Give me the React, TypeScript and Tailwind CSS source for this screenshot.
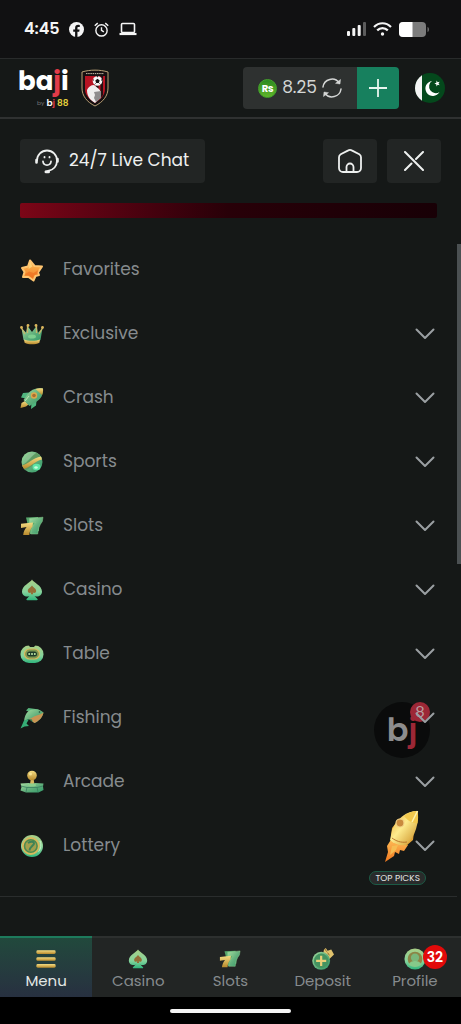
import React from 'react';

// Shared gradients, referenced by id from every icon
const Gradients = () => (
  <svg width="0" height="0" className="absolute" aria-hidden="true">
    <defs>
      <linearGradient id="gold" x1="0" y1="0" x2="0" y2="1">
        <stop offset="0" stopColor="#f3dc82" />
        <stop offset="1" stopColor="#b98a2c" />
      </linearGradient>
      <linearGradient id="green" x1="0" y1="0" x2="1" y2="1">
        <stop offset="0" stopColor="#a5dda0" />
        <stop offset="0.55" stopColor="#5fae7b" />
        <stop offset="1" stopColor="#2f9a68" />
      </linearGradient>
      <linearGradient id="mint" x1="0" y1="0" x2="0" y2="1">
        <stop offset="0" stopColor="#a9cf86" />
        <stop offset="0.6" stopColor="#85d39c" />
        <stop offset="1" stopColor="#2fb57c" />
      </linearGradient>
      <linearGradient id="orange" x1="0" y1="0" x2="0" y2="1">
        <stop offset="0" stopColor="#ffc05a" />
        <stop offset="1" stopColor="#f0781f" />
      </linearGradient>
      <linearGradient id="rocketBody" x1="0" y1="0" x2="1" y2="1">
        <stop offset="0" stopColor="#e9a52e" />
        <stop offset="0.45" stopColor="#fdeb8d" />
        <stop offset="1" stopColor="#c98a1e" />
      </linearGradient>
    </defs>
  </svg>
);

interface IconProps {
  className?: string;
}

const Svg: React.FC<IconProps & { children: React.ReactNode }> = ({ className = 'size-6', children }) => (
  <svg viewBox="0 0 24 24" className={className} fill="none" aria-hidden="true">
    {children}
  </svg>
);

const StarIcon = () => (
  <Svg>
    <path d="M10 2.500 14.500 8l7.500.5-4 6 1 2.500-3.500 1-2 4.500-5-3.500H3l1.500-5L2 10l6-1.500Z" fill="url(#orange)" stroke="#ffc570" strokeWidth="2" strokeLinejoin="round" />
    <path d="m5 16.500 4-3 4.500 1.500 5-3-1 4-3.500 1-1.500 3-3.500-2.500Z" fill="#ec6d20" opacity="0.600" />
    <path d="m10 3.500 2.500 5-4 2.500Z" fill="#ffe08a" opacity="0.700" />
  </Svg>
);

const CrownIcon = () => (
  <Svg>
    <path d="M1.500 6 6 10.500 7.500 4l4.500 6 4.500-6L18 10.500 22.500 6 20.500 18c-4 2-13 2-17 0Z" fill="url(#green)" />
    <path d="M1.500 6 5 12M7.500 4v7M16.500 4v7M22.500 6 19 12" stroke="#c9b468" strokeWidth="1.300" />
    <path d="M4 17.500c4 1.800 12 1.800 16 0l-.6 3.200c-4 2-10.800 2-14.800 0Z" fill="url(#gold)" />
    <circle cx="1.500" cy="5.500" r="1.400" fill="#dcb65c" />
    <circle cx="8" cy="3.500" r="1.400" fill="#dcb65c" />
    <circle cx="16" cy="3.500" r="1.400" fill="#dcb65c" />
    <circle cx="22.500" cy="5.500" r="1.400" fill="#dcb65c" />
    <ellipse cx="12" cy="14.500" rx="4" ry="2" fill="#7dcf8e" />
  </Svg>
);

const CrashIcon = () => (
  <Svg>
    <path d="M9 6.500 3 7 1 11.500l5 1ZM16.500 15l-.5 4.500-5 3.500.5-6Z" fill="#4fb57e" />
    <path d="M5 15 1.500 17 .5 22 6 20.500 8.500 18.500Z" fill="url(#gold)" />
    <path d="M23 2.500c-7-1.300-12 1-15 5L3.500 14l6 6 6.500-4c5-3 7.500-7.500 7-13.500Z" fill="url(#green)" />
    <path d="M23 2.500c-3-.5-5-.4-7.500.5l6.500 6c1-2.300 1.200-4 1-6.500Z" fill="url(#gold)" />
    <circle cx="14" cy="9.500" r="3.200" fill="#dca94c" />
    <circle cx="14" cy="9.500" r="1.800" fill="#a76e31" />
    <path d="m5 15 4-5" stroke="#bde9b5" />
  </Svg>
);

const SportsIcon = () => (
  <Svg>
    <circle cx="12" cy="12" r="10.500" fill="url(#green)" />
    <path d="M2 15C8 13 12 5 17 2.800L22 8C16 10 11 19 5.500 20.300Z" fill="#5f9a62" />
    <path d="M2 15.500C8 14 13 8 21 6.500l1 3C15 11 9 18 4 19Z" fill="url(#gold)" />
    <path d="M7 5.500c3-2.500 6-2.500 8-1.700-3 1-5 5-10 8Z" fill="#8dbf91" />
    <ellipse cx="16.500" cy="17" rx="4" ry="3.200" fill="#5fe5a5" />
    <ellipse cx="16" cy="17.500" rx="1.800" ry="1.300" fill="#c4ffdd" />
  </Svg>
);

const SlotsIcon: React.FC<IconProps> = ({ className }) => (
  <Svg className={className}>
    <path d="M6 3.500 18 3l1 14-9 3Z" fill="#57a66c" />
    <path d="M9.500 4.500 23 3.200l-.7 4.300C19.500 11 18 15 17.700 20h-7C11 15 13 11 15.500 8.500l-6 .4Z" fill="url(#green)" stroke="#8fce8f" strokeWidth="0.500" />
    <path d="m1 9.800 12-1.300-.5 4C10.500 15 9.500 17.500 9.300 21H3.200c.4-3.500 1.600-5.600 3.400-8L1 14Z" fill="url(#gold)" />
  </Svg>
);

const SpadeIcon: React.FC<IconProps> = ({ className }) => (
  <Svg className={className}>
    <path d="M12 1.500c1.500 3 10 6 10 12 0 4.500-4.500 6-7.500 4.500l3 3c.4.800 0 1.200-.7 1.200H7.200c-.7 0-1.100-.4-.7-1.200l3-3C6.500 19.500 2 18 2 13.500c0-6 8.500-9 10-12Z" fill="url(#mint)" />
    <path d="M12 7.500c.8 1.700 4.200 3 4.200 5.500 0 2-2.300 2.500-3.400 1.500l.4 1.800h-2.400l.4-1.800C10 15.500 7.800 15 7.800 13c0-2.500 3.400-3.800 4.200-5.500Z" fill="#936d36" />
  </Svg>
);

const TableIcon = () => (
  <Svg>
    <rect x="0.500" y="3.500" width="23" height="17.500" rx="8.500" fill="url(#mint)" />
    <path d="M8.500 3h7l-1.500 2h-4Z" fill="#151817" />
    <rect x="4.500" y="7" width="15" height="10" rx="5" fill="#7d9650" stroke="#d9b85e" strokeWidth="1.200" />
    <rect x="7" y="9.500" width="10" height="5" rx="2.500" fill="#1d3b2a" />
    <circle cx="9.200" cy="12" r="1" fill="#c2e9a6" />
    <circle cx="12" cy="12" r="1" fill="#c2e9a6" />
    <circle cx="14.800" cy="12" r="1" fill="#c2e9a6" />
  </Svg>
);

const FishIcon = () => (
  <Svg>
    <path d="M6 4.500 8.500 2 19 3.500 13 7Z" fill="#57b47c" />
    <path d="M23.500 6.500C20 2.500 12 2 8 5.500 5.500 8 4.500 11 4 15l5-2 5.500 4C19 15 22.500 11.500 23.500 6.500Z" fill="url(#green)" />
    <path d="M23.500 6.500c-4 3-8 2.500-12 5.500L9 13l5.500 4C19 15 22.500 11.500 23.500 6.500Z" fill="#c99453" />
    <path d="M4 14.500 2.500 18l-2 4.500 4-2 4.500-.5-2.500-2.500L9 13Z" fill="#35ad76" />
    <path d="m9 13 3 .5.500 2.500Z" fill="#2b8158" />
    <circle cx="19.500" cy="6" r="0.800" fill="#234534" />
  </Svg>
);

const ArcadeIcon = () => (
  <Svg>
    <path d="M10.800 9h2.800l.8 5H10Z" fill="#d7b65e" />
    <path d="M.5 13.500 9 13l3 1 3-1 8.500.5-.5 3 .5 3.500-5 2.500H6L.5 20.500 1.500 17Z" fill="url(#green)" />
    <path d="m1 16 6 1.500h10L23 16M7 17.500 6 22M17 17.500l1 4.500" stroke="#3b7f61" strokeWidth="0.800" />
    <ellipse cx="12" cy="15" rx="4" ry="1.600" fill="#8ccf8c" />
    <circle cx="12" cy="5.500" r="4.800" fill="url(#gold)" />
    <circle cx="10.500" cy="4" r="1.500" fill="#fff0a8" opacity="0.700" />
  </Svg>
);

const LotteryIcon = () => (
  <Svg>
    <circle cx="12" cy="12" r="11" fill="url(#mint)" />
    <circle cx="10.800" cy="12" r="8" fill="#4c8c50" stroke="#d8b95d" strokeWidth="1.800" />
    <circle cx="10.800" cy="12" r="5.500" fill="#a3a04d" />
    <path d="M8 9c3-2 6-1.500 6 .5s-4 3-4.500 7" stroke="#3f8357" strokeWidth="2" />
    <path d="M20 7c1.500 3 1 8-1.500 10.500" stroke="#c5f7c6" strokeWidth="1" />
  </Svg>
);

const DepositIcon = () => (
  <Svg>
    <path d="m13 2 2-2 2 3 4-1.500L24 7l-5 5-7-4Z" fill="#e0c26c" />
    <path d="m17 5 2 3M14 1l2 3" stroke="#8c6728" />
    <circle cx="10" cy="14" r="9.800" fill="url(#green)" />
    <circle cx="10" cy="14" r="8" fill="#459460" />
    <path d="M8.800 8.500h2.400v4.300h4.300v2.400h-4.300v4.300H8.800v-4.300H4.500v-2.400h4.300Z" fill="#ead078" />
  </Svg>
);

const ProfileIcon = () => (
  <Svg>
    <circle cx="12" cy="12" r="11.500" fill="url(#mint)" />
    <circle cx="12" cy="12" r="8" fill="#8c8446" />
    <circle cx="12" cy="10.500" r="4.500" fill="#79b77b" />
    <path d="M5 18c2-5 12-5 14 0-3.500 3.500-10.500 3.500-14 0Z" fill="#85c98a" />
  </Svg>
);

const MenuIcon = () => (
  <Svg>
    <rect x="1.500" y="2.500" width="21" height="4" rx="1.500" fill="url(#gold)" />
    <rect x="1.500" y="10" width="21" height="4" rx="1.500" fill="url(#gold)" />
    <rect x="1.500" y="17.500" width="21" height="4" rx="1.500" fill="url(#gold)" />
  </Svg>
);

const CrestLogo = () => (
  <svg viewBox="0 0 28 38" className="h-[38px] w-7" aria-label="Club crest" role="img">
    <path d="M1 3c8-2.500 18-2.500 26 0v16c0 8-5 14-13 18C6 33 1 27 1 19Z" fill="#171011" stroke="#b9a277" strokeWidth="1" />
    <path d="M4 7h20v13c0 6-4 10-10 14C8 30 4 26 4 20Z" fill="#b81322" />
    <path d="M15 7h2.500v24L15 33ZM19.500 7H22v19l-2.500 3Z" fill="#241113" />
    <path d="M5 4.600h18" stroke="#c7bda7" strokeWidth="1" strokeDasharray="1.500 0.700" />
    <path d="M6 21c1-3 4-5 7-5l5 4 2 3-1 2 1 3-6 6C9 31 6 27 6 21Z" fill="#f0eeee" />
    <path d="m13 23 7-1v7l-5 4-2-4 1-3Z" fill="#8f8c8d" />
    <circle cx="16.500" cy="12" r="4.800" fill="#f7f7f7" />
    <path d="m16.500 9.800 2.200 1.600-.9 2.500h-2.600l-.9-2.500Z" fill="#171011" />
    <path d="M16.500 7.200v1M21 11h-1M12 11h1M13.500 15.500l1-1M19.500 15.500l-1-1" stroke="#171011" />
  </svg>
);

const FlagIcon = () => (
  <svg viewBox="0 0 30 30" className="size-[30px] rounded-full" aria-hidden="true">
    <rect width="30" height="30" fill="#04481c" />
    <rect width="7" height="30" fill="#f4f4f4" />
    <path d="M17 8a7.500 7.500 0 1 0 7.500 11A6.500 6.500 0 1 1 17 8Z" fill="#fff" />
    <path d="m21.500 7.500 1.200 1.800 2-.5-1.200 1.800 1.200 1.700-2-.5-1.200 1.700-.1-2.100-2-.8 2-.8Z" fill="#fff" />
  </svg>
);

const RefreshIcon = () => (
  <svg viewBox="0 0 20 20" className="size-5" fill="none" stroke="#d4d6d5" strokeWidth="1.500" aria-hidden="true">
    <path d="M1 9a9 9 0 0 1 16.300-4M19 11A9 9 0 0 1 2.700 15" strokeLinecap="round" />
    <path d="M18.500 1.500 18 6l-4.500-.7ZM1.500 18.500 2 14l4.500.7Z" fill="#d4d6d5" strokeWidth="0.500" />
  </svg>
);

const ChatIcon = () => (
  <svg viewBox="0 0 26 26" className="size-[26px]" fill="none" stroke="#eef0ef" strokeWidth="1.800" strokeLinecap="round" aria-hidden="true">
    <path d="M3 12.500a10 10 0 0 1 20 0c0 5.500-3.500 9.500-9 10.500" />
    <path d="M2.500 12v2.500M23.500 11v2.500" strokeWidth="2.600" />
    <path d="M12 23.800h2.500" strokeWidth="3" />
    <path d="M9 13.500c.6 4.800 7.400 4.800 8 0M10.500 8.800v.6M15.500 8.800v.6" />
  </svg>
);

const HomeIcon = () => (
  <svg viewBox="0 0 26 26" className="size-[26px]" fill="none" stroke="#eef0ef" strokeWidth="1.800" aria-hidden="true">
    <path d="M11.300 2.400a3.500 3.500 0 0 1 3.400 0l7.600 3.800A3.500 3.500 0 0 1 24 9.300V20a4 4 0 0 1-4 4H6a4 4 0 0 1-4-4V9.300a3.500 3.500 0 0 1 1.700-3.100ZM9.500 24v-5a3.500 3.500 0 0 1 7 0v5" />
  </svg>
);

const CloseIcon = () => (
  <svg viewBox="0 0 20 20" className="size-5" stroke="#eef0ef" strokeWidth="2" strokeLinecap="round" aria-hidden="true">
    <path d="m1 1 18 18M19 1l-7 7M7.500 12.500 1 19" />
  </svg>
);

const ChevronIcon = () => (
  <svg viewBox="0 0 20 12" className="h-3 w-5" fill="none" stroke="#9a9fa2" strokeWidth="2" strokeLinecap="round" strokeLinejoin="round" aria-hidden="true">
    <path d="m1.500 1.500 8.500 8.500 8.500-8.500" />
  </svg>
);

const StatusBar = () => (
  <div className="flex h-[58px] items-center justify-between bg-[#111112] pl-6 pr-[31px] text-[#f5f5f5]">
    <div className="flex items-center gap-2.5">
      <span className="w-[35px] text-base font-semibold">4:45</span>
      <svg viewBox="0 0 16 16" className="size-[15px]" aria-hidden="true">
        <circle cx="8" cy="8" r="8" fill="#f5f5f5" />
        <path d="M6.500 16v-5.500h-2V8h2V6.500c0-2.300 1.300-3.500 3.400-3.500l1.600.2v2H10c-.8 0-1 .5-1 1.100V8h2.300l-.4 2.500H9V16Z" fill="#111112" />
      </svg>
      <svg viewBox="0 0 16 16" className="size-[15px]" fill="none" stroke="#f5f5f5" strokeWidth="1.500" aria-hidden="true">
        <circle cx="8" cy="9" r="6" />
        <path d="M8 5.500V9l2.500 1.600M.8 4 4 1.200M15.200 4 12 1.200" />
      </svg>
      <svg viewBox="0 0 18 14" className="h-3.5 w-[18px]" fill="none" stroke="#f5f5f5" aria-hidden="true">
        <rect x="2.500" y="1.500" width="13" height="9" rx="1" strokeWidth="1.600" />
        <path d="M.5 12h17" strokeWidth="2.200" />
      </svg>
    </div>
    <div className="flex items-center gap-[7px]">
      <svg viewBox="0 0 19 14" className="h-3.5 w-[19px]" fill="#f5f5f5" aria-hidden="true">
        <rect y="9" width="3" height="5" rx="1" />
        <rect x="5.300" y="6" width="3" height="8" rx="1" />
        <rect x="10.700" y="3" width="3" height="11" rx="1" />
        <rect x="16" width="3" height="14" rx="1" fill="#5c5c5c" />
      </svg>
      <svg viewBox="0 0 19 14" className="h-3.5 w-[19px]" fill="none" stroke="#f5f5f5" strokeWidth="2.200" aria-hidden="true">
        <path d="M1 5c5-5 12-5 17 0M4.200 8.400c3-3 7.600-3 10.600 0" />
        <circle cx="9.500" cy="12" r="1.700" fill="#f5f5f5" stroke="none" />
      </svg>
      <svg viewBox="0 0 31 15" className="h-[15px] w-[31px]" aria-hidden="true">
        <rect width="27" height="15" rx="4" fill="#7c7c7c" />
        <path d="M4 0h9.500v15H4a4 4 0 0 1-4-4V4a4 4 0 0 1 4-4Z" fill="#fff" />
        <path d="M28.500 5c2 .5 2 4.500 0 5Z" fill="#6c6c6c" />
      </svg>
    </div>
  </div>
);

const Header = () => (
  <header className="flex h-[61px] items-center justify-between border-t border-b-2 border-t-[#292b2b] border-b-[#2f3131] bg-[#151817] pl-[18px] pr-4">
    <a href="#home" className="flex items-center gap-3" aria-label="baji">
      <div className="flex flex-col items-end">
        <span className="text-[26px] leading-7 font-bold text-white">
          ba<span className="text-[#e23b49]">j</span>i
        </span>
        <span className="mt-0.5 flex items-center gap-0.5 text-[9px] leading-3 font-semibold text-white">
          <span className="text-[6px] font-normal text-[#777]">by</span>
          <span>b<span className="text-[#e23b49]">j</span></span>
          <span className="text-[#e4cf3c]">88</span>
        </span>
      </div>
      <CrestLogo />
    </a>
    <div className="flex items-center gap-4">
      <div className="flex h-[42px] overflow-hidden rounded">
        <button type="button" className="flex w-[114px] items-center justify-center gap-[5px] bg-[#2e3130] text-[17px] text-[#d4d6d5]" aria-label="Balance 8.25, refresh">
          <span className="flex size-[19px] items-center justify-center rounded-full border border-[#43a42b] bg-linear-to-b from-[#2b8a20] to-[#5fb52a] text-[10px] font-bold text-white">
            ₨
          </span>
          8.25
          <RefreshIcon />
        </button>
        <button type="button" className="flex w-[42px] items-center justify-center bg-[#17805e]" aria-label="Deposit">
          <svg viewBox="0 0 18 18" className="size-[18px]" stroke="#e8f5ef" strokeWidth="1.800" aria-hidden="true">
            <path d="M9 0v18M0 9h18" />
          </svg>
        </button>
      </div>
      <button type="button" aria-label="Country">
        <FlagIcon />
      </button>
    </div>
  </header>
);

const MENU_ITEMS = [
  { label: 'Favorites', icon: <StarIcon />, expandable: false },
  { label: 'Exclusive', icon: <CrownIcon />, expandable: true },
  { label: 'Crash', icon: <CrashIcon />, expandable: true },
  { label: 'Sports', icon: <SportsIcon />, expandable: true },
  { label: 'Slots', icon: <SlotsIcon />, expandable: true },
  { label: 'Casino', icon: <SpadeIcon />, expandable: true },
  { label: 'Table', icon: <TableIcon />, expandable: true },
  { label: 'Fishing', icon: <FishIcon />, expandable: true },
  { label: 'Arcade', icon: <ArcadeIcon />, expandable: true },
  { label: 'Lottery', icon: <LotteryIcon />, expandable: true },
];

const MenuList = () => (
  <ul className="mt-5">
    {MENU_ITEMS.map((item) => (
      <li key={item.label}>
        <button type="button" className="flex h-16 w-full items-center pl-5 pr-[26px] text-left">
          {item.icon}
          <span className="ml-[19px] flex-1 text-[17px] text-[#868b8e]">{item.label}</span>
          {item.expandable && (
            <span className="relative z-10">
              <ChevronIcon />
            </span>
          )}
        </button>
      </li>
    ))}
  </ul>
);

// Promo shortcuts floating over the menu
const FloatingActions = () => (
  <div className="absolute top-[583px] right-[31px] flex flex-col items-end">
    <button type="button" className="relative flex size-14 items-center justify-center rounded-full bg-[#0a0b0b] text-[32px] font-semibold text-[#8d8d8d]" aria-label="bj, 8 notifications">
      <span className="leading-none">
        b<span className="text-[#9c2736]">j</span>
      </span>
      <span className="absolute top-0 right-0 flex size-5 items-center justify-center rounded-full bg-[#9c2736] text-[15px] leading-5 font-normal text-[#b9a0a3]">
        8
      </span>
    </button>
    <button type="button" className="mt-[51px] mr-1 flex flex-col items-center">
      <svg viewBox="0 0 36 54" className="ml-2 h-[54px] w-9" aria-hidden="true">
        <path d="m8 29-5 8 1 6-3 10 9-6 1-4 4 2 1-4 4 1 4-6Z" fill="url(#orange)" />
        <path d="m8 37-2 9 6-5 2-5Z" fill="#f6bd52" />
        <path d="M12 14 8 19l-1 10 5-3ZM30 23l-1 8-7 6-1-5Z" fill="#dfa136" />
        <path d="M33.500 2C23 2 13 9 8 21L6 31c4 4 10 6 16 5 10-9 13-23 11.500-34Z" fill="url(#rocketBody)" />
        <path d="M33.500 2c-6 0-10 2-13.500 5 4 5 8 7 13.500 7.500.8-4 .8-9 0-12.500Z" fill="#f2c84d" />
        <path d="M33.500 2 28 13" stroke="#fff2ae" strokeWidth="1.500" />
        <circle cx="16" cy="14" r="4" fill="#c98a3d" stroke="#f3d488" strokeWidth="1.200" />
        <path d="M8 29c4 3 9 5 15 4" stroke="#b9752b" fill="none" />
      </svg>
      <span className="mt-2 rounded-full border border-[#1c5b46] bg-[#292b2b] px-[5px] text-[9px] leading-3 whitespace-nowrap text-[#e2e3e3]">
        TOP PICKS
      </span>
    </button>
  </div>
);

const NAV_ITEMS = [
  { label: 'Menu', icon: <MenuIcon />, active: true, badge: 0 },
  { label: 'Casino', icon: <SpadeIcon />, active: false, badge: 0 },
  { label: 'Slots', icon: <SlotsIcon />, active: false, badge: 0 },
  { label: 'Deposit', icon: <DepositIcon />, active: false, badge: 0 },
  { label: 'Profile', icon: <ProfileIcon />, active: false, badge: 32 },
];

const BottomNav = () => (
  <nav className="grid h-[61px] grid-cols-5 bg-[#222524]">
    {NAV_ITEMS.map((item) => (
      <a
        key={item.label}
        href={`#${item.label.toLowerCase()}`}
        className={`flex flex-col items-center border-t-2 pt-[9px] ${
          item.active
            ? 'border-[#1d7a5c] bg-linear-to-b from-[#21493c] to-[#273040] text-[#e3e8e6]'
            : 'border-[#2d302f] text-[#868b8e]'
        }`}
      >
        <span className="relative flex size-[22px]">
          {item.icon}
          {item.badge > 0 && (
            <span className="absolute -top-0.5 left-[19px] flex size-6 items-center justify-center rounded-full bg-[#e20a0a] text-sm font-semibold text-white">
              {item.badge}
            </span>
          )}
        </span>
        <span className="mt-0.5 text-[15px] leading-5">{item.label}</span>
      </a>
    ))}
  </nav>
);

export default function App() {
  return (
    <div className="flex min-h-screen flex-col bg-[#151817] font-['Poppins','Inter',sans-serif]">
      <Gradients />
      <StatusBar />
      <Header />
      <main className="relative flex-1 pt-5">
        <div className="flex justify-between px-5">
          <button type="button" className="flex h-11 items-center gap-[9px] rounded bg-[#222524] pl-3.5 pr-4 text-[17px] text-[#eef0ef]">
            <ChatIcon />
            24/7 Live Chat
          </button>
          <div className="flex gap-2.5">
            <button type="button" className="flex h-11 w-[54px] items-center justify-center rounded bg-[#222524]" aria-label="Home">
              <HomeIcon />
            </button>
            <button type="button" className="flex h-11 w-[54px] items-center justify-center rounded bg-[#222524]" aria-label="Close">
              <CloseIcon />
            </button>
          </div>
        </div>
        <div className="mt-5 ml-5 mr-6 h-[15px] rounded-xs bg-linear-to-r from-[#7c0617] via-[#280008] to-[#180006]" />
        <MenuList />
        <hr className="mt-[18px] mr-1 border-[#2a2d2d]" />
        <FloatingActions />
        <div className="absolute top-[125px] right-0 h-80 w-1 bg-[#4b5052]" />
      </main>
      <BottomNav />
      <div className="flex h-[27px] items-center justify-center bg-black">
        <div className="h-1 w-[121px] rounded-full bg-[#f4f4f4]" />
      </div>
    </div>
  );
}
